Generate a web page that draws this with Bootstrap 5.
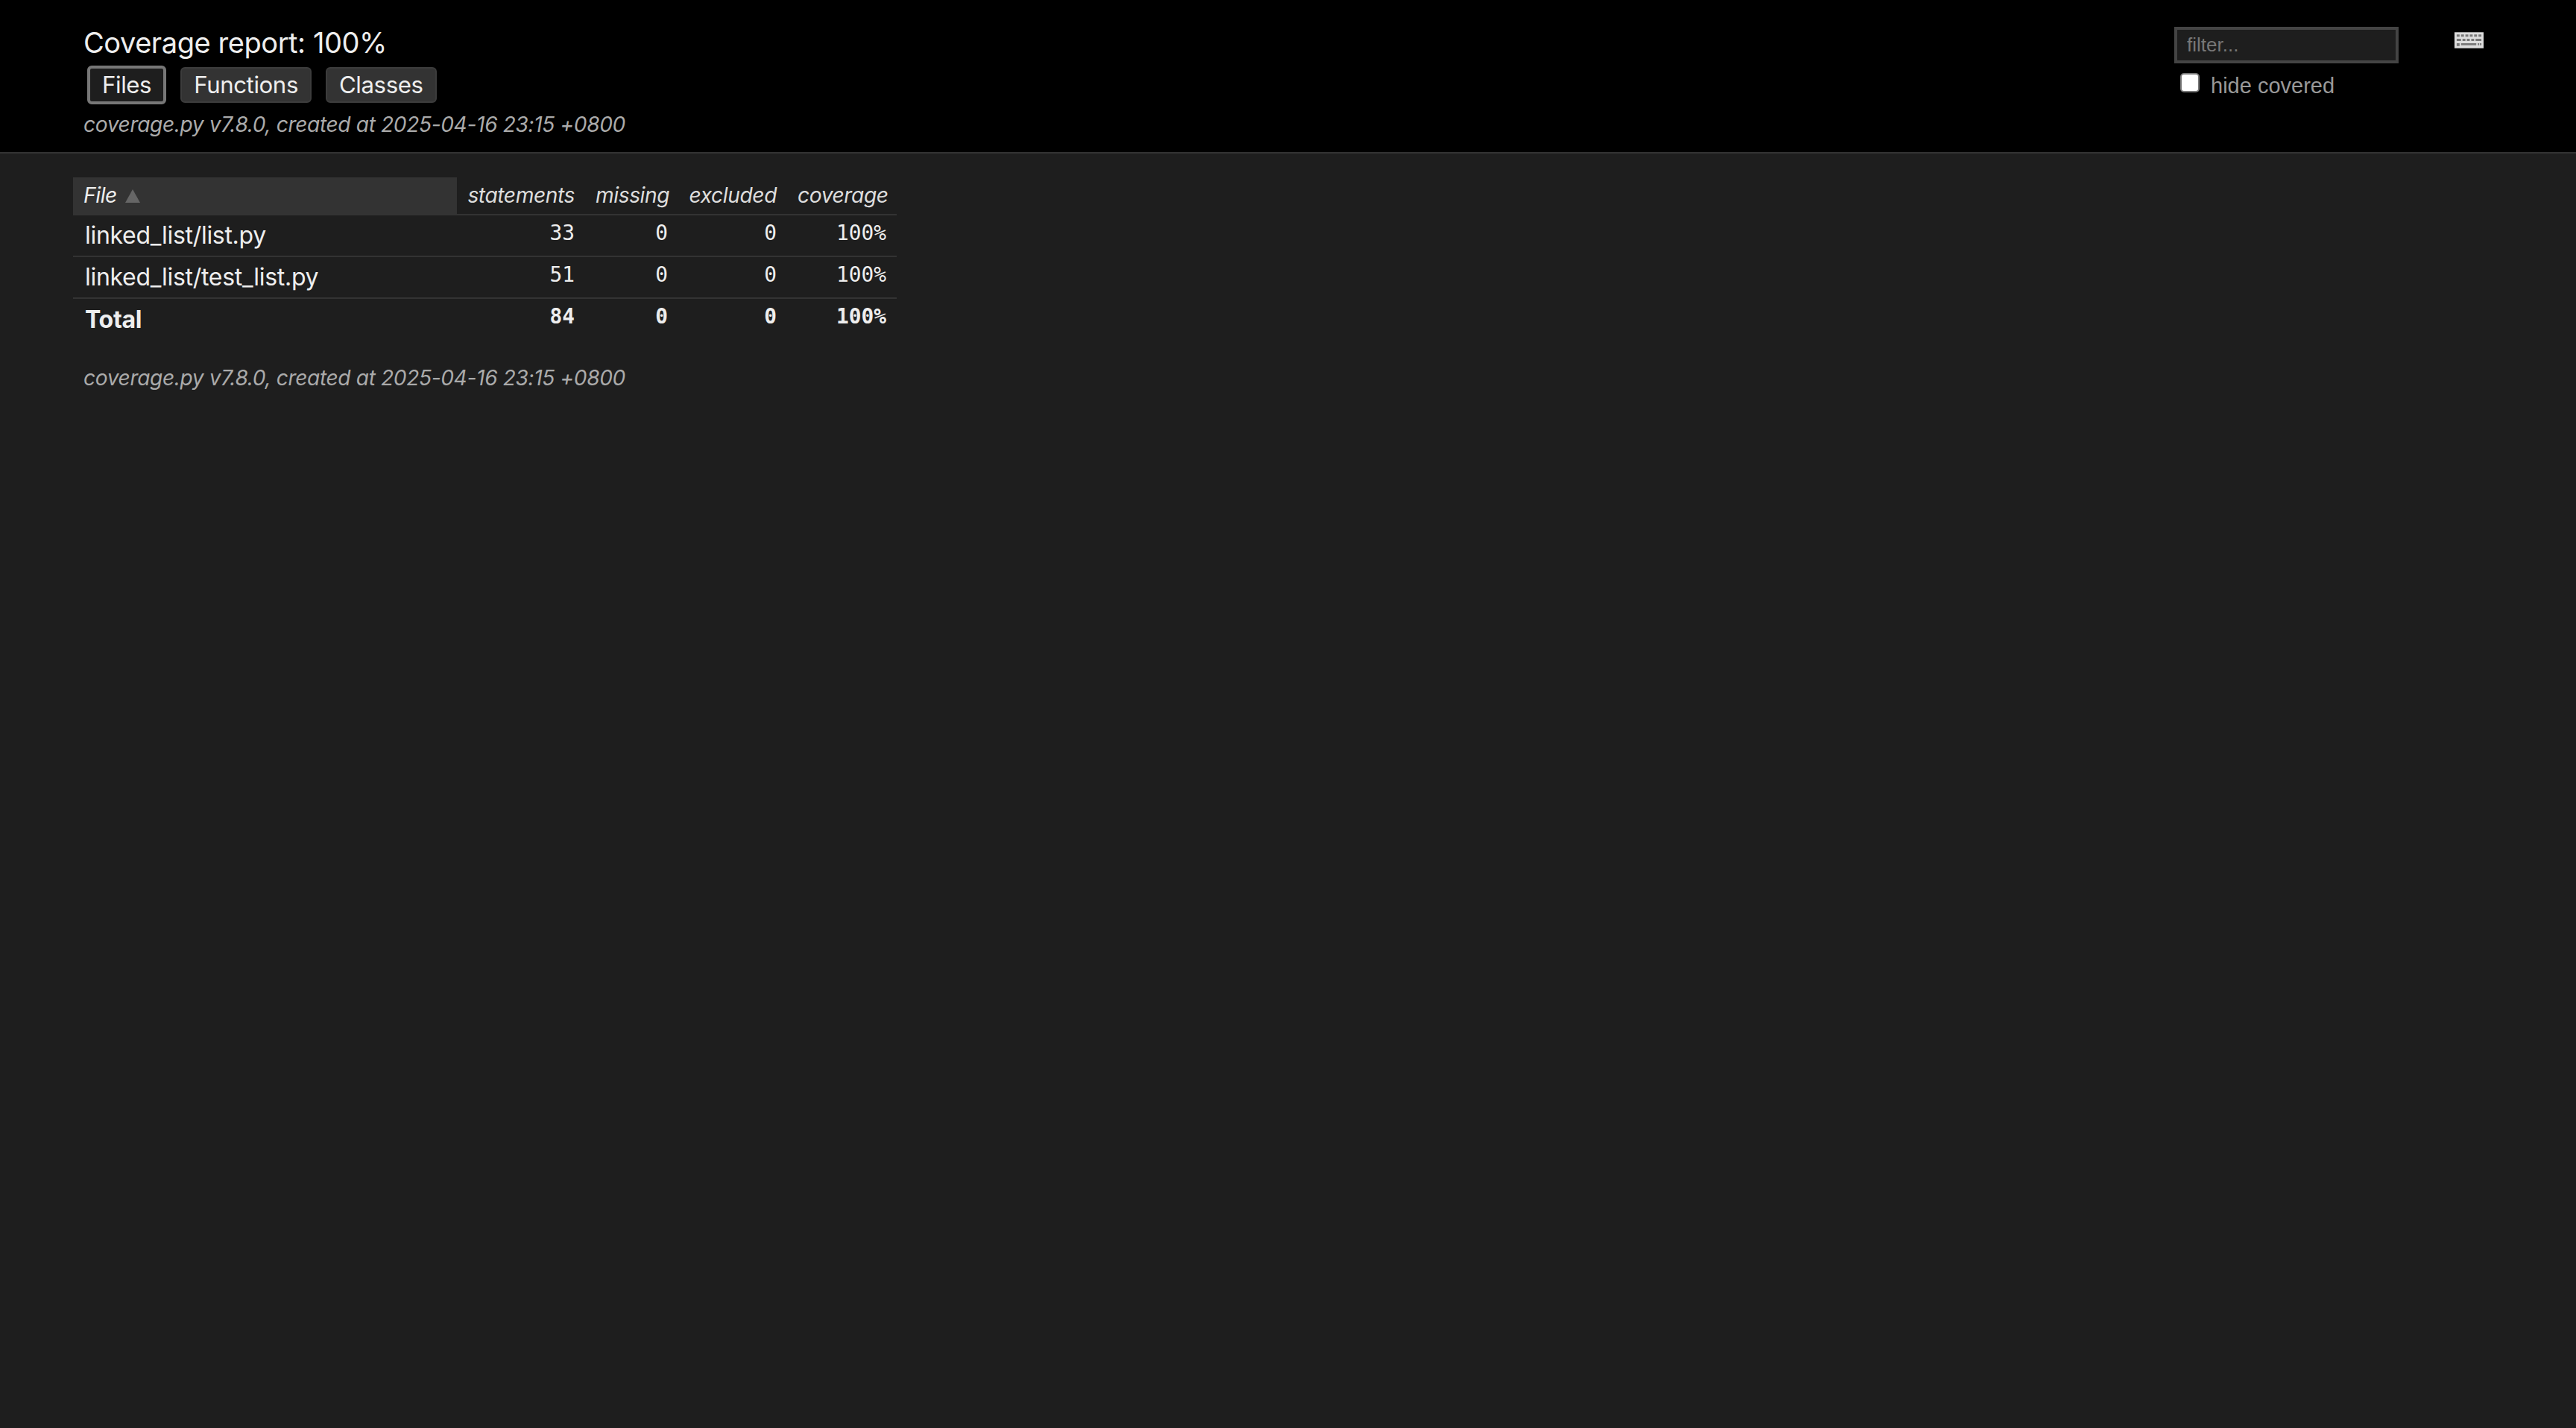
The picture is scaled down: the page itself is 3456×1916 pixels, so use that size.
<!DOCTYPE html>
<html lang="en"><head><meta charset="utf-8"><title>Coverage report</title>
<link href="https://cdn.jsdelivr.net/npm/bootstrap@5.3.0/dist/css/bootstrap.min.css" rel="stylesheet">
<style>
html,body{height:100%}
body{background:#1e1e1e;color:#eee;font-family:Inter,"Liberation Sans",sans-serif;font-size:28px;min-height:1916px}
.rep-head{background:#000;border-bottom:2px solid #333;height:206px;padding:0 124px 0 112px}
.rep-title{font-size:38px;font-weight:400;line-height:44px;margin:0;padding-top:35px;color:#eee;letter-spacing:-.43px}
.rep-tabs{margin-top:9px;margin-left:5px;gap:19px;height:52px;align-items:center}
.rep-btn{background:#333;color:#eee;border:2px solid #3c3c3c;border-radius:6px;font-size:31.2px;line-height:44px;height:48px;padding:0 16px;letter-spacing:-.4px;text-decoration:none;display:block}
.rep-btn.on{background:#1e1e1e;border:4px solid #777;height:52px;line-height:44px;padding:0 16px}
.rep-meta{font-style:italic;font-size:28.1px;color:#aaa;line-height:34px;letter-spacing:-.35px;margin-top:10px}
.rep-tools{width:416px}
.rep-filter{width:301px;height:49px;background:#1e1e1e;border:4px solid #444;padding:0 13px;font-family:"Liberation Sans",sans-serif;font-size:26px;color:#eee;outline:0;display:block;margin-left:1px}
.rep-filter::placeholder{color:#777;opacity:1}
.rep-hide{color:#999;font-family:"Liberation Sans",sans-serif;font-size:29px;line-height:34px;margin-top:5px;margin-left:9px}
.rep-hide input{appearance:none;width:26px;height:26px;background:#fff;border:2px solid #777;border-radius:5px;margin:0 15px 0 0;display:block}
.rep-hide span{padding-top:8px}
.rep-top{padding-top:36px}
.rep-kbd{width:40px;height:22px;display:block;margin-top:43px;margin-left:75px}
.rep-body{padding:32px 0 0 98px}
.rep-table{width:1105px;margin:0;--bs-table-bg:transparent;--bs-table-color:#eee;table-layout:fixed;border-collapse:collapse}
.rep-table th,.rep-table td{padding:0 14px;border-bottom:2px solid #333;text-align:right;box-shadow:none;color:#eee;vertical-align:middle}
.rep-table th{font-weight:400;font-style:italic;font-size:28.2px;height:50px;letter-spacing:-.42px;color:#ddd;padding-bottom:1px}
.rep-table th:first-child{background:#333;text-align:left;color:#eee}
.rep-table th:last-child{padding-right:16px}
.rep-table td{height:56px;font-family:"DejaVu Sans Mono",monospace;font-size:27.8px;line-height:34px;padding-bottom:6px}
.rep-table td:first-child{font-family:Inter,"Liberation Sans",sans-serif;font-size:32px;text-align:left;padding:0 16px;letter-spacing:-.3px}
.rep-table tr:last-child td{border-bottom:0;font-weight:700;padding-bottom:8px}
.rep-table tr:last-child td:first-child{padding-bottom:0}
.rep-arrow{display:inline-block;width:0;height:0;border-left:10px solid transparent;border-right:10px solid transparent;border-bottom:18px solid #666;margin-left:11px}
.rep-foot{font-style:italic;font-size:28.1px;color:#aaa;line-height:34px;padding:34px 0 0 112px;letter-spacing:-.35px}
</style></head><body>
<header class="rep-head d-flex justify-content-between">
<div>
<h1 class="rep-title">Coverage report: 100%</h1>
<div class="d-flex rep-tabs"><a class="rep-btn on" href="#">Files</a><a class="rep-btn" href="#">Functions</a><a class="rep-btn" href="#">Classes</a></div>
<div class="rep-meta">coverage.py v7.8.0, created at 2025-04-16 23:15 +0800</div>
</div>
<div class="d-flex rep-tools">
<div class="rep-top">
<input class="rep-filter" type="text" placeholder="filter...">
<label class="rep-hide d-flex align-items-center"><input type="checkbox"><span>hide covered</span></label>
</div>
<svg class="rep-kbd" viewBox="0 0 40 22" aria-hidden="true"><rect width="40" height="22" fill="#ddd"/><g fill="#777"><path d="M3 3h4v3H3zM9 3h4v3H9zM15 3h4v3h-4zM21 3h4v3h-4zM27 3h4v3h-4zM33 3h4v3h-4zM3 9h6v3H3zM11 9h4v3h-4zM17 9h4v3h-4zM23 9h4v3h-4zM29 9h8v3h-8zM3 15h4v4H3zM9 15h21v3H9zM32 15h2v3h-2zM35 15h2v3h-2z"/></g></svg>
</div>
</header>
<main class="rep-body">
<table class="table rep-table">
<colgroup><col style="width:515px"><col style="width:172px"><col style="width:125px"><col style="width:146px"><col style="width:147px"></colgroup>
<thead><tr><th>File<span class="rep-arrow"></span></th><th>statements</th><th>missing</th><th>excluded</th><th>coverage</th></tr></thead>
<tbody>
<tr><td>linked_list/list.py</td><td>33</td><td>0</td><td>0</td><td>100%</td></tr>
<tr><td>linked_list/test_list.py</td><td>51</td><td>0</td><td>0</td><td>100%</td></tr>
<tr><td>Total</td><td>84</td><td>0</td><td>0</td><td>100%</td></tr>
</tbody></table>
</main>
<div class="rep-foot">coverage.py v7.8.0, created at 2025-04-16 23:15 +0800</div>
<script src="https://cdn.jsdelivr.net/npm/bootstrap@5.3.0/dist/js/bootstrap.bundle.min.js"></script>
</body></html>
